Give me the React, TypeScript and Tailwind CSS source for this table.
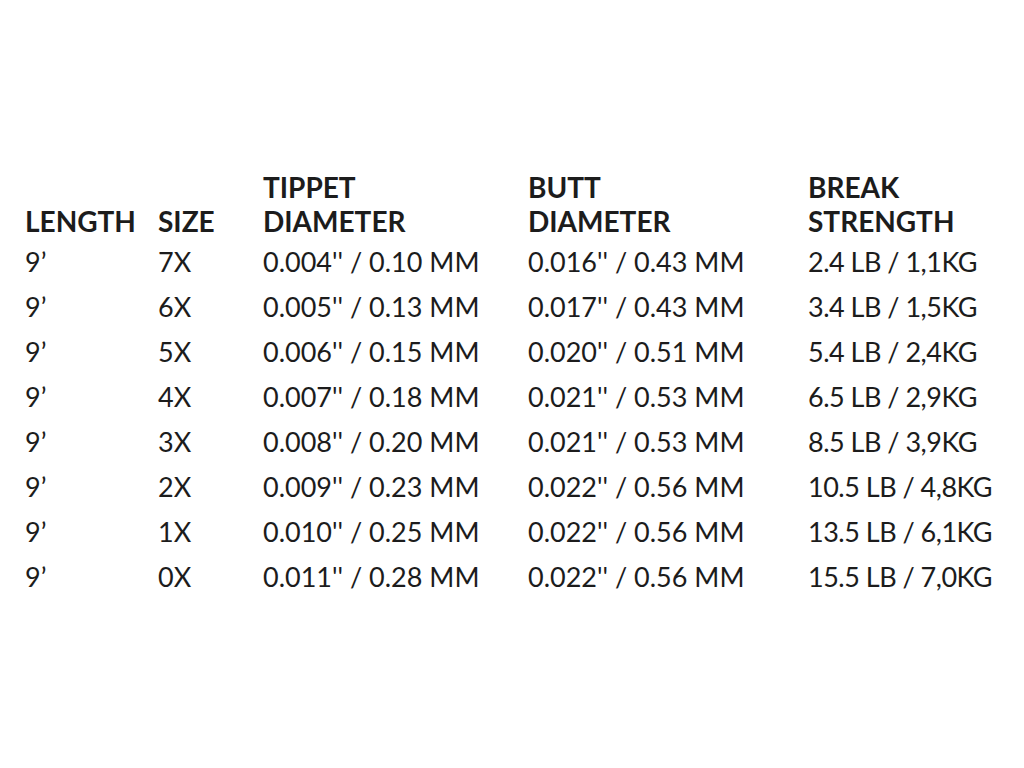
const rows = [
  ["9’", "7X", "0.004'' / 0.10 MM", "0.016'' / 0.43 MM", "2.4 LB / 1,1KG"],
  ["9’", "6X", "0.005'' / 0.13 MM", "0.017'' / 0.43 MM", "3.4 LB / 1,5KG"],
  ["9’", "5X", "0.006'' / 0.15 MM", "0.020'' / 0.51 MM", "5.4 LB / 2,4KG"],
  ["9’", "4X", "0.007'' / 0.18 MM", "0.021'' / 0.53 MM", "6.5 LB / 2,9KG"],
  ["9’", "3X", "0.008'' / 0.20 MM", "0.021'' / 0.53 MM", "8.5 LB / 3,9KG"],
  ["9’", "2X", "0.009'' / 0.23 MM", "0.022'' / 0.56 MM", "10.5 LB / 4,8KG"],
  ["9’", "1X", "0.010'' / 0.25 MM", "0.022'' / 0.56 MM", "13.5 LB / 6,1KG"],
  ["9’", "0X", "0.011'' / 0.28 MM", "0.022'' / 0.56 MM", "15.5 LB / 7,0KG"],
]

const headers = [
  ["", "LENGTH"],
  ["", "SIZE"],
  ["TIPPET", "DIAMETER"],
  ["BUTT", "DIAMETER"],
  ["BREAK", "STRENGTH"],
]

const cols = "grid grid-cols-[133px_105px_265px_280px_1fr]"

const App = () => {
  return (
    <div className="w-[1024px] h-[768px] bg-white pt-[170px] pl-[25px] text-[#1c1c1c] font-['Lato',sans-serif]">
      <div className={cols}>
        {headers.map(([a, b], i) => (
          <div key={i} className="text-[28px] leading-[34px] font-bold">
            <div className="h-[34px]">{a}</div>
            <div>{b}</div>
          </div>
        ))}
      </div>
      <div className="mt-[1px]">
        {rows.map((row, r) => (
          <div key={r} className={cols + " h-[45px] text-[27px] leading-[45px]"}>
            {row.map((cell, c) => (
              <div key={c} className={c === 4 ? "whitespace-nowrap tracking-[-0.5px]" : "whitespace-nowrap"}>
                {cell}
              </div>
            ))}
          </div>
        ))}
      </div>
    </div>
  )
}

export default App
